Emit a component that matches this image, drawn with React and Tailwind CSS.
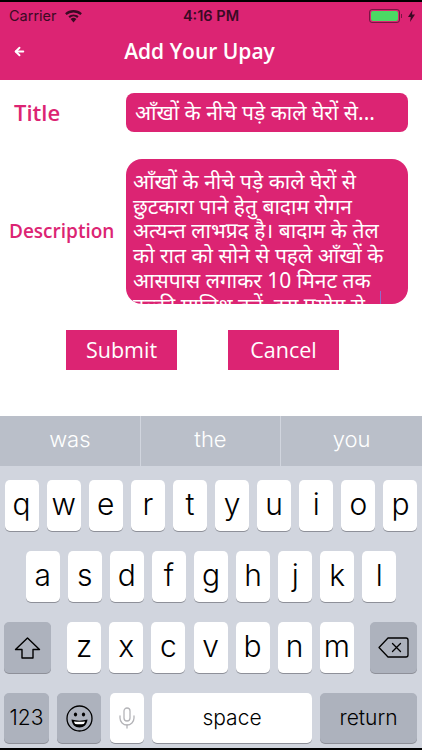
import { ArrowLeft, Mic } from "lucide-react";

const ROW_ONE = ["q", "w", "e", "r", "t", "y", "u", "i", "o", "p"];
const ROW_TWO = ["a", "s", "d", "f", "g", "h", "j", "k", "l"];
const ROW_THREE = ["z", "x", "c", "v", "b", "n", "m"];
const HINDI_FONT = "font-['Noto_Sans','Noto_Sans_Devanagari','Lohit_Devanagari','DejaVu_Sans',sans-serif]";

function Key({ label }) {
  return (
    <div className="flex h-[51px] w-[34px] items-center justify-center rounded-[5px] bg-white pb-1 text-[30px] font-light leading-none text-black shadow-[0_1px_0_#8e9099]">
      {label}
    </div>
  );
}

function StatusBar() {
  return (
    <div className="flex h-[28px] items-center justify-between pl-[9px] pr-[7px] text-[14.500px] text-[#3a0a24]">
      <div className="flex items-center gap-[7px]">
        <span>Carrier</span>
        <svg width="19" height="14" viewBox="0 0 19 14" fill="#3a0a24">
          <path d="M9.500 13.500 6.600 10a4.400 4.400 0 0 1 5.800 0z" />
          <path d="M9.500 5.400c2 0 3.800.7 5.100 1.900l-1.400 1.700a5.600 5.600 0 0 0-7.400 0L4.400 7.300a7.600 7.600 0 0 1 5.100-1.900z" />
          <path d="M9.500 1c3.200 0 6.200 1.200 8.400 3.200l-1.500 1.800a10.400 10.400 0 0 0-13.800 0L1.100 4.200A12.500 12.500 0 0 1 9.500 1z" />
        </svg>
      </div>
      <span className="absolute left-0 right-0 text-center text-[14.500px] font-semibold">4:16 PM</span>
      <div className="flex items-center gap-[6px]">
        <div className="flex items-center gap-[1px]">
          <div className="h-[14px] w-[31px] rounded-[3px] border border-[#3a0a24]/60 p-[1px]">
            <div className="h-full w-full rounded-[2px] bg-[#4cd964]" />
          </div>
          <div className="h-[4px] w-[1px] bg-[#3a0a24]/60" />
        </div>
        <svg width="7" height="12" viewBox="0 0 7 12" fill="#3a0a24">
          <path d="M4.500 0 0 7h2.800L2 12l5-7.500H4z" />
        </svg>
      </div>
    </div>
  );
}

export default function App() {
  return (
    <div className="flex h-[750px] w-[422px] flex-col overflow-hidden bg-white font-['Inter',sans-serif]">
      <div className="h-[2px] bg-black" />
      {/* Header */}
      <div className="relative h-[78px] bg-[#dc2473] text-white">
        <StatusBar />
        <div className="relative flex h-[44px] items-center justify-center pr-[23px]">
          <ArrowLeft className="absolute left-[13px] top-[15px] h-[13px] w-[13px]" strokeWidth={3.500} />
          <h1 className="font-['Open_Sans',sans-serif] text-[21px] font-semibold">Add Your Upay</h1>
        </div>
      </div>

      {/* Form */}
      <div className="flex h-[336px] flex-col">
        <div className="mt-[13px] flex items-center">
          <label className="w-[126px] pl-[14px] font-['Open_Sans',sans-serif] text-[22px] font-semibold text-[#dc2473]">
            Title
          </label>
          <div className={`flex h-[39px] w-[282px] items-center rounded-[8px] bg-[#dc2473] pl-[9px] text-[21px] text-white ${HINDI_FONT}`}>
            आँखों के नीचे पड़े काले घेरों से...
          </div>
        </div>
        <div className="mt-[27px] flex items-center">
          <label className="w-[126px] pl-[9px] font-['Open_Sans',sans-serif] text-[19px] font-semibold text-[#dc2473]">
            Description
          </label>
          <div className={`relative h-[145px] w-[282px] overflow-hidden rounded-[16px] bg-[#dc2473] pl-[7px] pr-[8px] pt-[10px] text-[21px] leading-[24.700px] text-white ${HINDI_FONT}`}>
            आँखों के नीचे पड़े काले घेरों से छुटकारा पाने हेतु बादाम रोगन अत्यन्त लाभप्रद है। बादाम के तेल को रात को सोने से पहले आँखों के आसपास लगाकर 10 मिनट तक हल्की मालिश करें, इस प्रयोग से
            <span className="absolute bottom-0 left-[254px] h-[13px] w-[1px] bg-[#8f6bc9]" />
          </div>
        </div>
        <div className="mt-[26px] flex justify-center gap-[51px] pr-[17px] text-[21.500px] text-white">
          <button className="h-[40px] w-[111px] bg-[#dc2473] font-['Open_Sans',sans-serif]">Submit</button>
          <button className="h-[40px] w-[111px] bg-[#dc2473] font-['Open_Sans',sans-serif]">Cancel</button>
        </div>
      </div>

      {/* Keyboard */}
      <div className="flex-1 bg-[#d1d5de]">
        <div className="grid h-[50px] grid-cols-3 bg-[#babfc9] text-[22px] font-light text-white">
          <div className="flex items-center justify-center border-r border-[#d1d5de] pb-[4px]">was</div>
          <div className="flex items-center justify-center border-r border-[#d1d5de] pb-[4px]">the</div>
          <div className="flex items-center justify-center pb-[4px]">you</div>
        </div>
        <div className="mt-[14px] flex justify-center gap-[8.100px]">
          {ROW_ONE.map((k) => <Key key={k} label={k} />)}
        </div>
        <div className="mt-[20px] flex justify-center gap-[8.100px]">
          {ROW_TWO.map((k) => <Key key={k} label={k} />)}
        </div>
        <div className="mt-[20px] flex items-center justify-between pl-[4px] pr-[5px]">
          <div className="flex h-[51px] w-[47px] items-center justify-center rounded-[5px] bg-[#adb2bd] shadow-[0_1px_0_#8e9099]">
            <svg width="27" height="24" viewBox="0 0 27 24" fill="none" stroke="black" strokeWidth="1.400" strokeLinejoin="round">
              <path d="M13.500 2 1.500 13.500H8V22h11v-8.500h6.500z" />
            </svg>
          </div>
          <div className="flex gap-[8.100px]">
            {ROW_THREE.map((k) => <Key key={k} label={k} />)}
          </div>
          <div className="flex h-[51px] w-[47px] items-center justify-center rounded-[5px] bg-[#adb2bd] shadow-[0_1px_0_#8e9099]">
            <svg width="31" height="21" viewBox="0 0 31 21" fill="none" stroke="black" strokeWidth="1.300" strokeLinejoin="round" strokeLinecap="round">
              <path d="M10 1h18a2 2 0 0 1 2 2v15a2 2 0 0 1-2 2H10L1 10.500z" />
              <path d="M14.500 6.500l8 8M22.500 6.500l-8 8" />
            </svg>
          </div>
        </div>
        <div className="mt-[20px] flex px-[4px]">
          <div className="flex h-[50px] w-[45px] items-center justify-center rounded-[5px] bg-[#adb2bd] text-[21px] font-light text-black shadow-[0_1px_0_#8e9099]">123</div>
          <div className="ml-[8px] flex h-[50px] w-[44px] items-center justify-center rounded-[5px] bg-[#adb2bd] shadow-[0_1px_0_#8e9099]">
            <svg width="27" height="27" viewBox="0 0 27 27" fill="none" stroke="black" strokeWidth="1.300">
              <circle cx="13.500" cy="13.500" r="12.500" />
              <ellipse cx="9.500" cy="9.500" rx="1.600" ry="2.100" fill="black" stroke="none" />
              <ellipse cx="17.500" cy="9.500" rx="1.600" ry="2.100" fill="black" stroke="none" />
              <path d="M5.500 14.500c5 1.500 11 1.500 16 0-.5 5-3.500 8-8 8s-7.500-3-8-8z" fill="black" stroke="none" />
              <path d="M8 16.400c3.500.6 7.500.6 11 0-.4 1.400-.8 2-1.300 2.500-2.500.5-5.900.5-8.400 0-.5-.5-1-1.100-1.300-2.500z" fill="white" stroke="none" />
            </svg>
          </div>
          <div className="ml-[9px] flex h-[50px] w-[34px] items-center justify-center rounded-[5px] bg-white shadow-[0_1px_0_#8e9099]">
            <Mic className="h-[28px] w-[24px] text-[#b4b4b8]" strokeWidth={1.300} />
          </div>
          <div className="ml-[8px] flex h-[50px] w-[160px] items-center justify-center rounded-[5px] bg-white text-[21px] font-light text-black shadow-[0_1px_0_#8e9099]">space</div>
          <div className="ml-[8px] flex h-[50px] w-[97px] items-center justify-center rounded-[5px] bg-[#adb2bd] text-[21px] font-light text-black shadow-[0_1px_0_#8e9099]">return</div>
        </div>
      </div>
      <div className="h-[2px] bg-black" />
    </div>
  );
}
